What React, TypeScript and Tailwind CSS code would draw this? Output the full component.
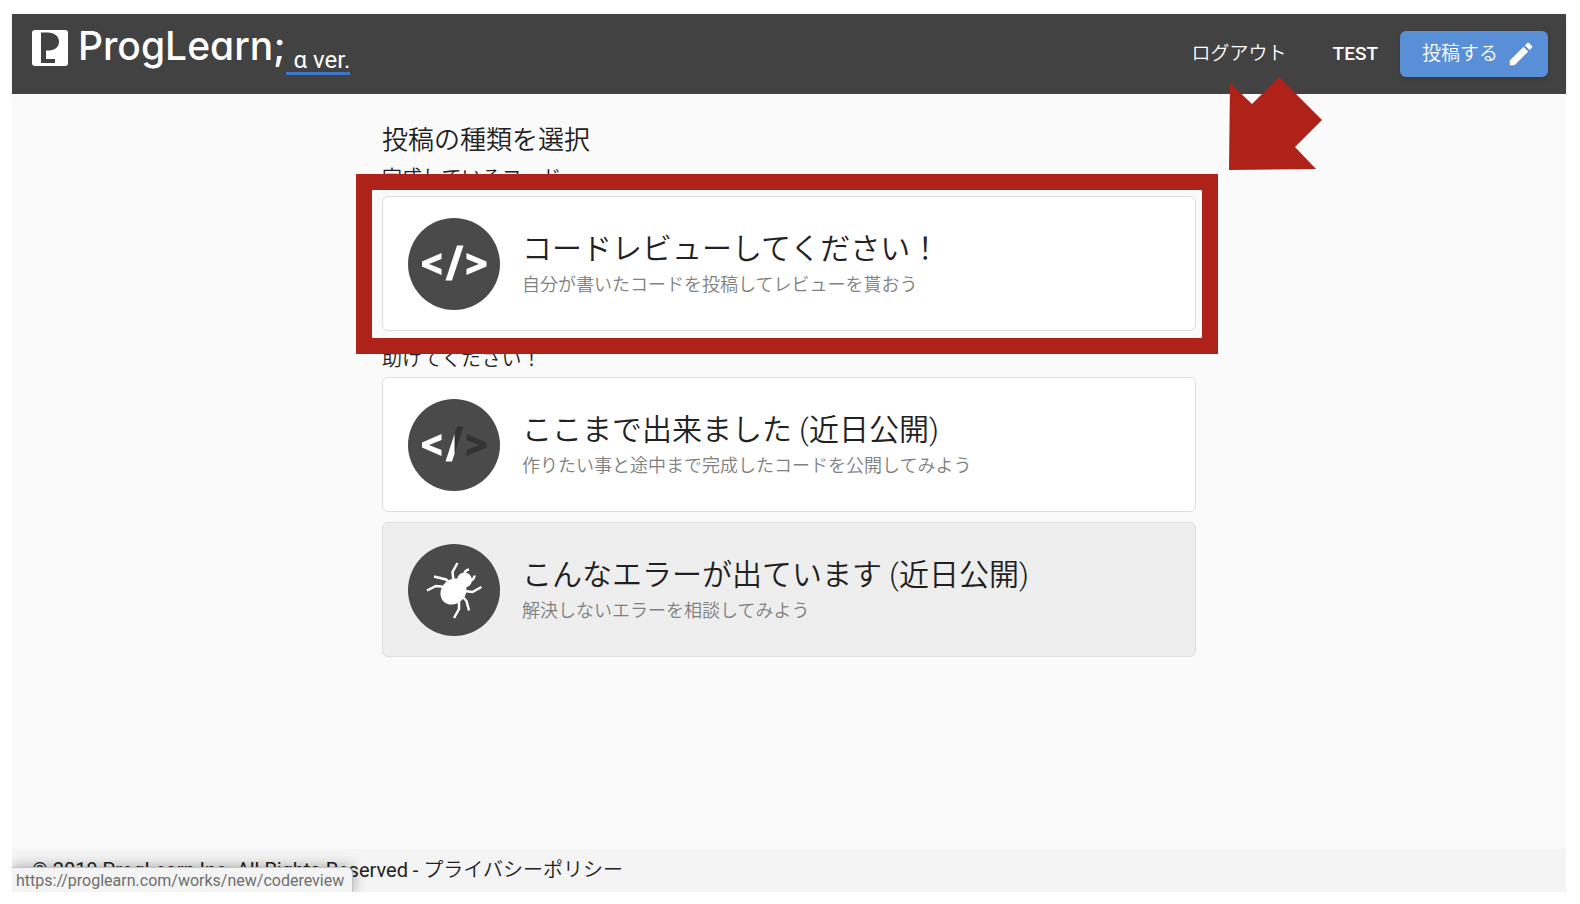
import { MdEdit } from "react-icons/md";

interface PostTypeCardProps {
  title: string;
  description: string;
  icon: React.ReactNode;
  href: string;
  active?: boolean;
  disabled?: boolean;
}

function LogoMark() {
  return (
    <svg width="36" height="36" viewBox="0 0 36 36" aria-hidden="true">
      <rect width="36" height="36" rx="3" fill="#fff" />
      <path
        d="M9 2.500H16C22 2.500 27 6 27 11.500C27 17 23 20.500 17 20.500H14V29H23V33H9Z"
        fill="#424242"
      />
    </svg>
  );
}

function CodeIcon() {
  return (
    <svg width="92" height="92" viewBox="0 0 92 92" aria-hidden="true">
      <circle cx="46" cy="46" r="46" fill="#4a4a4a" />
      <g fill="#fff">
        <path d="M33.500 35V41L21 46L33.500 51V57L14 48.500V43.500Z" />
        <path d="M49 27.500H55.500L44 62.500H37.500Z" />
        <path d="M58.500 35V41L71 46L58.500 51V57L78.500 48.500V43.500Z" />
      </g>
    </svg>
  );
}

function HalfCodeIcon() {
  return (
    <svg width="92" height="92" viewBox="0 0 92 92" aria-hidden="true">
      <circle cx="46" cy="46" r="46" fill="#4a4a4a" />
      <path
        d="M33.500 35V41L21 46L33.500 51V57L14 48.500V43.500Z"
        fill="#fff"
      />
      <path d="M49 27.500H55.500L46.500 55V35.100Z" fill="#333" />
      <path d="M46.500 35.100V54.900L44 62.500H37.500Z" fill="#fff" />
      <path
        d="M58.500 35V41L71 46L58.500 51V57L78.500 48.500V43.500Z"
        fill="#333"
      />
    </svg>
  );
}

function BugIcon() {
  return (
    <svg width="92" height="92" viewBox="0 0 92 92" aria-hidden="true">
      <circle cx="46" cy="46" r="46" fill="#4a4a4a" />
      <ellipse
        cx="45.500"
        cy="47.500"
        rx="14"
        ry="12"
        transform="rotate(-45 45.500 47.500)"
        fill="#fff"
      />
      <circle cx="56.500" cy="36" r="7.500" fill="#fff" />
      <g fill="none" stroke="#fff" strokeWidth="2.500">
        <path d="M49.500 19L44.500 28L45.500 37" />
        <path d="M26 32.500L38 35.500L42 39" />
        <path d="M19 46.500L28 42L37 43" />
        <path d="M73.500 43L64.500 48L56 47" />
        <path d="M61 66.500L58.500 57L54 52" />
        <path d="M46 74L51 65V55" />
        <path d="M57 30C56 28 58 26 61 25.500" />
        <path d="M62 36C64 37 66.500 34 66.500 31.500" />
      </g>
    </svg>
  );
}

function PointerArrow() {
  return (
    <svg
      width="93"
      height="93"
      viewBox="0 0 93 93"
      className="absolute -top-[119px] -right-[126px] z-10"
      aria-hidden="true"
    >
      <path
        d="M1 6L23 27L50 0L93 43L66 70L87 92L0 93Z"
        fill="#ae2219"
      />
    </svg>
  );
}

function PostTypeCard({
  title,
  description,
  icon,
  href,
  active,
  disabled,
}: PostTypeCardProps) {
  return (
    <div className="relative">
      <a
        href={href}
        className={`flex items-center gap-[22px] rounded-md border border-[#dedede] px-[25px] py-5 h-[135px] ${
          disabled ? "bg-[#eeeeee]" : "bg-white"
        }`}
      >
        <span className="shrink-0">{icon}</span>
        <span className="min-w-0 pt-0.5">
          <span className="block text-[30px] leading-10 text-[#212121]">
            {title}
          </span>
          <span className="block text-[18px] leading-8 text-[#808080]">
            {description}
          </span>
        </span>
      </a>

      {/* Highlight around the selected type */}
      {active && (
        <>
          <div className="pointer-events-none absolute -top-[22px] -bottom-[23px] -left-[26px] -right-[22px] border-16 border-[#ae2219]" />
          <PointerArrow />
        </>
      )}
    </div>
  );
}

export default function App() {
  return (
    <div className="min-h-screen flex flex-col bg-white pt-[14px] pb-3 pl-3 pr-[14px] font-['Roboto','Noto_Sans_CJK_JP_DemiLight','Noto_Sans_CJK_JP',sans-serif] font-[350] text-[#212121]">
      {/* Header */}
      <header className="flex h-20 items-center justify-between bg-[#424242] pl-5 pr-[18px] text-white shadow-sm">
        <a href="/" className="flex h-full items-start pt-4">
          <LogoMark />
          <span className="ml-[10px] font-['Inter',sans-serif] text-[39px] leading-8 font-medium [font-feature-settings:'cv11']">
            ProgLearn;
          </span>
          <span className="mt-4 border-b-3 border-[#3a76cb] pt-0.5 pl-2 text-[24px] leading-6 font-normal">
            α ver.
          </span>
        </a>

        <nav className="flex items-center text-[19px]">
          <a href="/logout" className="mr-[46px]">
            ログアウト
          </a>
          <a href="/users/test" className="mr-[22px] font-medium">
            TEST
          </a>
          <button
            type="button"
            className="flex h-[46px] items-center gap-2 rounded-md bg-[#588fd7] pl-[22px] pr-3 shadow-md"
          >
            投稿する
            <MdEdit size={30} aria-hidden="true" />
          </button>
        </nav>
      </header>

      {/* Post types */}
      <main className="flex-1 bg-[#fafafa] pt-[26px]">
        <div className="mx-auto w-full max-w-[814px]">
          <h1 className="text-[26px] leading-10">投稿の種類を選択</h1>

          <h2 className="text-[20px] leading-9">完成しているコード</h2>
          <PostTypeCard
            title="コードレビューしてください！"
            description="自分が書いたコードを投稿してレビューを貰おう"
            icon={<CodeIcon />}
            href="/works/new/codereview"
            active
          />

          <h2 className="mt-[10px] text-[20px] leading-9">助けてください！</h2>
          <div className="flex flex-col gap-[10px]">
            <PostTypeCard
              title="ここまで出来ました (近日公開)"
              description="作りたい事と途中まで完成したコードを公開してみよう"
              icon={<HalfCodeIcon />}
              href="/works/new/progress"
            />
            <PostTypeCard
              title="こんなエラーが出ています (近日公開)"
              description="解決しないエラーを相談してみよう"
              icon={<BugIcon />}
              href="/works/new/error"
              disabled
            />
          </div>
        </div>
      </main>

      {/* Footer */}
      <footer className="relative overflow-hidden bg-[#f4f4f4] px-5 text-[20px] leading-[43px] font-normal">
        © 2019 ProgLearn Inc. All Rights Reserved -{" "}
        <a href="/privacy">プライバシーポリシー</a>
        <div className="absolute bottom-0 left-0 rounded-tr-md border-t border-r border-[#c4c4c4] bg-[#f4f4f4] pt-0.5 pl-1 pr-2 text-[16px] leading-[22px] text-[#6e6e6e] shadow-[0_0_14px_rgba(0,0,0,0.35)]">
          https://proglearn.com/works/new/codereview
        </div>
      </footer>
    </div>
  );
}
